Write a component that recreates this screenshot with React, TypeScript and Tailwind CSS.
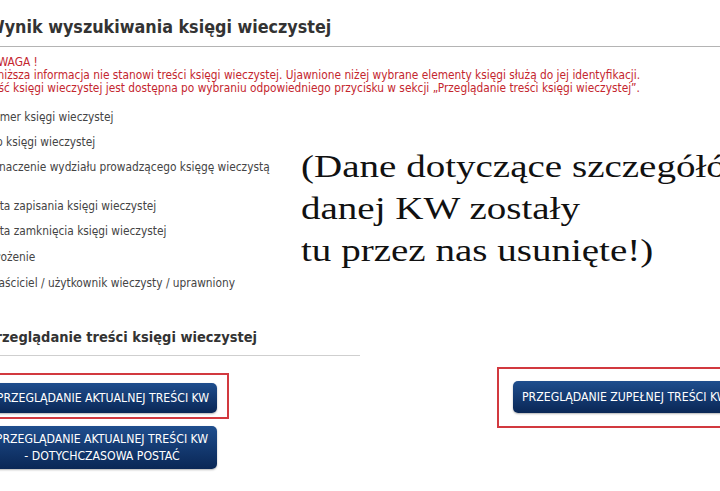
import React from 'react';

const labels = [
  { text: 'Numer księgi wieczystej', h: 'h-[25px]' },
  { text: 'Typ księgi wieczystej', h: 'h-[25px]' },
  { text: 'Oznaczenie wydziału prowadzącego księgę wieczystą', h: 'h-[39px]' },
  { text: 'Data zapisania księgi wieczystej', h: 'h-[25px]' },
  { text: 'Data zamknięcia księgi wieczystej', h: 'h-[26px]' },
  { text: 'Położenie', h: 'h-[26px]' },
  { text: 'Właściciel / użytkownik wieczysty / uprawniony', h: 'h-[26px]' },
];

const btn =
  'flex flex-col justify-center rounded-[5px] bg-gradient-to-b from-[#1f4e8e] to-[#0a2756] text-white text-[12.2px] uppercase leading-[17px] shadow-[0_1px_2px_rgba(0,0,0,0.3)] whitespace-nowrap';

export default function App() {
  return (
    <div className="w-[720px] h-[491px] overflow-hidden bg-white font-['DejaVu_Sans_Condensed','DejaVu_Sans',sans-serif] text-[#444]">
      <div className="-ml-[14px]">
        {/* Header */}
        <div className="border-b border-[#b4b4b4] pt-[15px] pb-[7px] w-[760px]">
          <h1 className="text-[17.8px] font-bold text-[#333] leading-[24px] pl-[1px]">
            Wynik wyszukiwania księgi wieczystej
          </h1>
        </div>

        {/* Warning */}
        <div className="mt-[9px] text-[11.8px] leading-[13px] text-[#c4262e] whitespace-nowrap">
          <p className="pl-[4px]">UWAGA !</p>
          <p className="-ml-[1px]">Poniższa informacja nie stanowi treści księgi wieczystej. Ujawnione niżej wybrane elementy księgi służą do jej identyfikacji.</p>
          <p className="-ml-[3px]">Treść księgi wieczystej jest dostępna po wybraniu odpowiedniego przycisku w sekcji „Przeglądanie treści księgi wieczystej”.</p>
        </div>

        {/* Details */}
        <div className="flex mt-[15px]">
          <div className="w-[316px] shrink-0 text-[11.8px] -ml-[1px]">
            {labels.map((l) => (
              <div key={l.text} className={`${l.h} leading-[14px] whitespace-nowrap`}>
                {l.text}
              </div>
            ))}
          </div>
          <div className="pt-[35px] font-['Liberation_Serif',serif] text-[32px] leading-[42px] text-[#111] whitespace-nowrap origin-left scale-x-[1.22]">
            <p>(Dane dotyczące szczegółów</p>
            <p>danej KW zostały</p>
            <p>tu przez nas usunięte!)</p>
          </div>
        </div>

        {/* Section */}
        <div className="mt-[26px] w-[374px] border-b border-[#cfcfcf] pb-[9px]">
          <h2 className="text-[14.5px] font-bold text-[#333] leading-[18px] whitespace-nowrap">Przeglądanie treści księgi wieczystej</h2>
        </div>

        <div className="flex mt-[17px]">
          <div className="flex flex-col gap-[7px] w-[511px] shrink-0">
            <div className="w-[243px] h-[46px] border-2 border-[#d2393f] pt-[8px] pl-[1px]">
              <div className={`${btn} items-center w-[228px] h-[30px]`}>Przeglądanie aktualnej treści KW</div>
            </div>
            <div className={`${btn} items-center w-[230px] h-[43px] ml-[1px]`}>
              <span>Przeglądanie aktualnej treści KW</span>
              <span>- dotychczasowa postać</span>
            </div>
          </div>
          <div className="-mt-[6px] w-[260px] h-[61px] shrink-0 border-2 border-[#d2393f] pl-[14px] pt-[12px]">
            <div className={`${btn} items-start w-[240px] h-[32px] pl-[9px]`}>Przeglądanie zupełnej treści KW</div>
          </div>
        </div>
      </div>
    </div>
  );
}
